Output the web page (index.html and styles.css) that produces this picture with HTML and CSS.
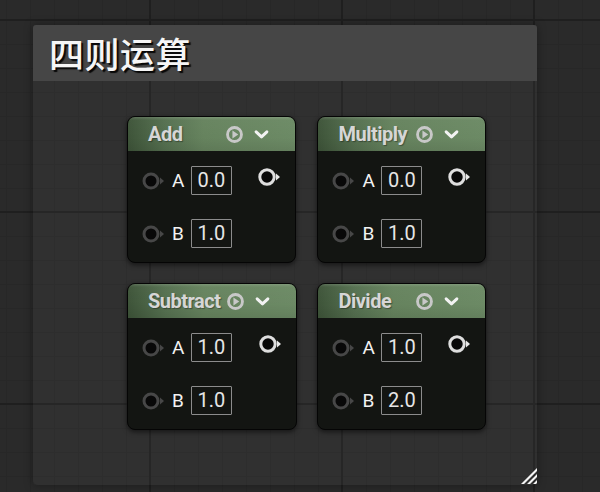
FILE: index.html
```html
<!DOCTYPE html>
<html lang="zh">
<head>
<meta charset="utf-8">
<title>四则运算</title>
<link rel="stylesheet" href="styles.css">
</head>
<body>
<div class="canvas">
  <div class="comment">
    <div class="comment-title">四则运算</div>
    <div class="comment-body">
      <div class="nodes">
        <div class="node">
          <div class="node-header">
            <span class="node-title">Add</span>
            <svg class="play" viewBox="0 0 18 18"><circle cx="9" cy="9" r="7.4" fill="none" stroke="#c8c8c8" stroke-width="3"/><path d="M6.8 4.8 L13 9 L6.8 13.2 Z" fill="#c8c8c8"/></svg>
            <svg class="chevron" viewBox="0 0 14 10"><path d="M2 2.5 L7 7.2 L12 2.5" fill="none" stroke="#f2f2f2" stroke-width="2.8" stroke-linecap="round" stroke-linejoin="round"/></svg>
          </div>
          <div class="node-body">
            <div class="row">
              <svg class="pin-in" viewBox="0 0 24 18"><circle cx="9" cy="9" r="7" fill="#080808" stroke="#474747" stroke-width="3"/><path d="M18 5.6 L22 9 L18 12.4 Z" fill="#474747"/></svg>
              <span class="label">A</span>
              <span class="value">0.0</span>
              <svg class="pin-out" viewBox="0 0 24 20"><circle cx="10" cy="10" r="7.2" fill="#080808" stroke="#dedede" stroke-width="3"/><path d="M19 6.6 L23 10 L19 13.4 Z" fill="#e8e8e8"/></svg>
            </div>
            <div class="row">
              <svg class="pin-in" viewBox="0 0 24 18"><circle cx="9" cy="9" r="7" fill="#080808" stroke="#474747" stroke-width="3"/><path d="M18 5.6 L22 9 L18 12.4 Z" fill="#474747"/></svg>
              <span class="label">B</span>
              <span class="value">1.0</span>
            </div>
          </div>
        </div>

        <div class="node">
          <div class="node-header">
            <span class="node-title">Multiply</span>
            <svg class="play" viewBox="0 0 18 18"><circle cx="9" cy="9" r="7.4" fill="none" stroke="#c8c8c8" stroke-width="3"/><path d="M6.8 4.8 L13 9 L6.8 13.2 Z" fill="#c8c8c8"/></svg>
            <svg class="chevron" viewBox="0 0 14 10"><path d="M2 2.5 L7 7.2 L12 2.5" fill="none" stroke="#f2f2f2" stroke-width="2.8" stroke-linecap="round" stroke-linejoin="round"/></svg>
          </div>
          <div class="node-body">
            <div class="row">
              <svg class="pin-in" viewBox="0 0 24 18"><circle cx="9" cy="9" r="7" fill="#080808" stroke="#474747" stroke-width="3"/><path d="M18 5.6 L22 9 L18 12.4 Z" fill="#474747"/></svg>
              <span class="label">A</span>
              <span class="value">0.0</span>
              <svg class="pin-out" viewBox="0 0 24 20"><circle cx="10" cy="10" r="7.2" fill="#080808" stroke="#dedede" stroke-width="3"/><path d="M19 6.6 L23 10 L19 13.4 Z" fill="#e8e8e8"/></svg>
            </div>
            <div class="row">
              <svg class="pin-in" viewBox="0 0 24 18"><circle cx="9" cy="9" r="7" fill="#080808" stroke="#474747" stroke-width="3"/><path d="M18 5.6 L22 9 L18 12.4 Z" fill="#474747"/></svg>
              <span class="label">B</span>
              <span class="value">1.0</span>
            </div>
          </div>
        </div>

        <div class="node">
          <div class="node-header">
            <span class="node-title">Subtract</span>
            <svg class="play" viewBox="0 0 18 18"><circle cx="9" cy="9" r="7.4" fill="none" stroke="#c8c8c8" stroke-width="3"/><path d="M6.8 4.8 L13 9 L6.8 13.2 Z" fill="#c8c8c8"/></svg>
            <svg class="chevron" viewBox="0 0 14 10"><path d="M2 2.5 L7 7.2 L12 2.5" fill="none" stroke="#f2f2f2" stroke-width="2.8" stroke-linecap="round" stroke-linejoin="round"/></svg>
          </div>
          <div class="node-body">
            <div class="row">
              <svg class="pin-in" viewBox="0 0 24 18"><circle cx="9" cy="9" r="7" fill="#080808" stroke="#474747" stroke-width="3"/><path d="M18 5.6 L22 9 L18 12.4 Z" fill="#474747"/></svg>
              <span class="label">A</span>
              <span class="value">1.0</span>
              <svg class="pin-out" viewBox="0 0 24 20"><circle cx="10" cy="10" r="7.2" fill="#080808" stroke="#dedede" stroke-width="3"/><path d="M19 6.6 L23 10 L19 13.4 Z" fill="#e8e8e8"/></svg>
            </div>
            <div class="row">
              <svg class="pin-in" viewBox="0 0 24 18"><circle cx="9" cy="9" r="7" fill="#080808" stroke="#474747" stroke-width="3"/><path d="M18 5.6 L22 9 L18 12.4 Z" fill="#474747"/></svg>
              <span class="label">B</span>
              <span class="value">1.0</span>
            </div>
          </div>
        </div>

        <div class="node">
          <div class="node-header">
            <span class="node-title">Divide</span>
            <svg class="play" viewBox="0 0 18 18"><circle cx="9" cy="9" r="7.4" fill="none" stroke="#c8c8c8" stroke-width="3"/><path d="M6.8 4.8 L13 9 L6.8 13.2 Z" fill="#c8c8c8"/></svg>
            <svg class="chevron" viewBox="0 0 14 10"><path d="M2 2.5 L7 7.2 L12 2.5" fill="none" stroke="#f2f2f2" stroke-width="2.8" stroke-linecap="round" stroke-linejoin="round"/></svg>
          </div>
          <div class="node-body">
            <div class="row">
              <svg class="pin-in" viewBox="0 0 24 18"><circle cx="9" cy="9" r="7" fill="#080808" stroke="#474747" stroke-width="3"/><path d="M18 5.6 L22 9 L18 12.4 Z" fill="#474747"/></svg>
              <span class="label">A</span>
              <span class="value">1.0</span>
              <svg class="pin-out" viewBox="0 0 24 20"><circle cx="10" cy="10" r="7.2" fill="#080808" stroke="#dedede" stroke-width="3"/><path d="M19 6.6 L23 10 L19 13.4 Z" fill="#e8e8e8"/></svg>
            </div>
            <div class="row">
              <svg class="pin-in" viewBox="0 0 24 18"><circle cx="9" cy="9" r="7" fill="#080808" stroke="#474747" stroke-width="3"/><path d="M18 5.6 L22 9 L18 12.4 Z" fill="#474747"/></svg>
              <span class="label">B</span>
              <span class="value">2.0</span>
            </div>
          </div>
        </div>
      </div>
      <svg class="resize" viewBox="0 0 20 20"><path d="M20 4 L20 7 L7 20 L4 20 Z M20 10 L20 13 L13 20 L10 20 Z M20 16 L20 19 L19 20 L16 20 Z" fill="#f4f4f4"/></svg>
    </div>
  </div>
</div>
</body>
</html>
```

FILE: styles.css
```css
* { box-sizing: border-box; }

html, body {
  margin: 0;
  padding: 0;
  width: 600px;
  height: 492px;
  overflow: hidden;
}

body {
  font-family: Roboto, "Liberation Sans", "Noto Sans CJK SC", sans-serif;
  background-color: #2a2a2a;
  background-image:
    linear-gradient(90deg, #1f1f1f 2px, transparent 2px),
    linear-gradient(180deg, #1f1f1f 2px, transparent 2px),
    linear-gradient(90deg, #272727 1px, transparent 1px),
    linear-gradient(180deg, #272727 1px, transparent 1px);
  background-size: 192px 192px, 192px 192px, 24px 24px, 24px 24px;
  background-position: 149px 0, 0 19px, 6px 0, 0 20px;
}

.canvas {
  padding: 25px 0 0 33px;
}

.comment {
  width: 504px;
  height: 460px;
  display: flex;
  flex-direction: column;
  border-radius: 3px;
  box-shadow: 0 0 10px rgba(0, 0, 0, 0.35);
}

.comment-title {
  height: 56px;
  flex: none;
  background: #464646;
  color: #f6f6f6;
  font-family: "Noto Sans CJK SC", sans-serif;
  font-weight: 500;
  font-size: 35px;
  line-height: 56px;
  padding-left: 16px;
  letter-spacing: 0.5px;
  text-shadow: 2px 2px 1px rgba(0, 0, 0, 0.9);
  border-radius: 3px 3px 0 0;
}

.comment-body {
  flex: 1;
  position: relative;
  background: rgba(255, 255, 255, 0.03);
  border-radius: 0 0 5px 5px;
  padding: 35px 0 0 94px;
}

.nodes {
  display: grid;
  grid-template-columns: repeat(2, max-content);
  justify-items: start;
  column-gap: 20px;
  row-gap: 20px;
}

.node {
  min-width: 169px;
  display: flex;
  flex-direction: column;
  border-radius: 8px;
  border: 1px solid #050505;
  background: #131512;
  box-shadow: 0 2px 5px rgba(0, 0, 0, 0.55);
  overflow: hidden;
}

.node-header {
  height: 34px;
  display: flex;
  align-items: center;
  padding: 0 26px 0 20px;
  background:
    linear-gradient(180deg, rgba(255, 255, 255, 0.14) 0, rgba(255, 255, 255, 0.02) 3px, rgba(0, 0, 0, 0) 60%, rgba(0, 0, 0, 0.08) 100%),
    linear-gradient(90deg, #3e5439 0%, #557050 22%, #66835e 45%, #6c8a65 100%);
}

.node-title {
  flex: 1;
  min-width: 0;
  color: #d6d6d6;
  font-weight: 700;
  font-size: 20px;
  letter-spacing: -0.5px;
  white-space: nowrap;
  text-shadow: 1px 1px 1px rgba(0, 0, 0, 0.35);
  margin-right: 7px;
}

.play {
  width: 17px;
  height: 17px;
  flex: none;
}

.chevron {
  width: 15px;
  height: 11px;
  flex: none;
  margin-left: 11px;
}

.node-body {
  display: flex;
  flex-direction: column;
  gap: 24px;
  padding: 15px 0 14px 14px;
}

.row {
  display: flex;
  align-items: center;
  height: 29px;
}

.pin-in {
  width: 24px;
  height: 18px;
  flex: none;
}

.label {
  color: #f2f2f2;
  font-size: 19px;
  margin-left: 6px;
  width: 12px;
}

.value {
  margin-left: 7px;
  width: 41px;
  height: 29px;
  border: 1px solid #8c8c8c;
  border-radius: 1px;
  color: #e6e6e6;
  font-size: 20px;
  line-height: 27px;
  text-align: center;
}

.pin-out {
  width: 24px;
  height: 20px;
  flex: none;
  margin-left: auto;
  margin-right: 14px;
  margin-top: -7px;
}

.resize {
  position: absolute;
  right: 0;
  bottom: 1px;
  width: 20px;
  height: 20px;
}
```
